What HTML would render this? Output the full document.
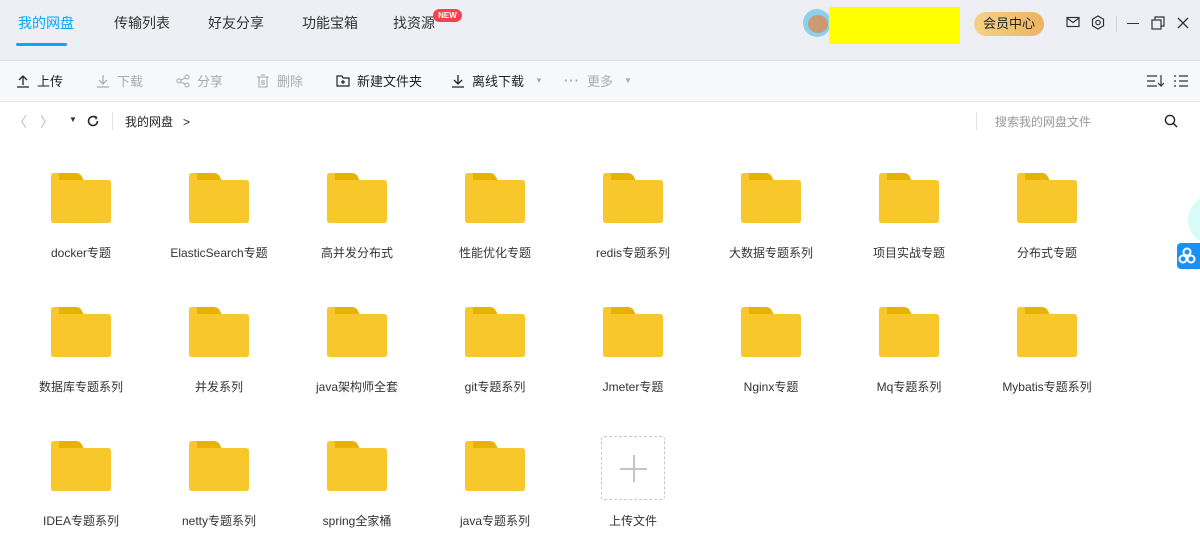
<!DOCTYPE html>
<html><head><meta charset="utf-8"><style>
*{margin:0;padding:0;box-sizing:border-box}
body{width:1200px;height:540px;overflow:hidden;background:#fff;font-family:"Liberation Sans","Noto Sans CJK SC",sans-serif;color:#333;position:relative}
.top{position:absolute;left:0;top:0;width:1200px;height:61px;background:#eeeff4;border-bottom:1px solid #dcdde2}
.tab{position:absolute;top:13px;font-size:14px;color:#333}
.tb{position:absolute;top:62px;left:0;width:1200px;height:40px;background:#f7f8fa;border-bottom:1px solid #e6e7eb}
.ti{position:absolute;top:9px;font-size:13px;color:#222;display:flex;align-items:center;gap:7px}
.ti.dis{color:#aaa}
.f{position:absolute;width:138px;text-align:center}
.f .lab{position:absolute;top:71px;width:138px;text-align:center;font-size:12px;color:#333}
.fold{position:absolute;left:39px;width:60px;height:50px}
</style></head><body>
<div class="top">
<div class="tab" style="left:18px;color:#06a7ff">我的网盘</div>
<div style="position:absolute;left:16px;top:43px;width:51px;height:3px;background:#06a7ff;border-radius:2px"></div>
<div class="tab" style="left:114px">传输列表</div>
<div class="tab" style="left:208px">好友分享</div>
<div class="tab" style="left:302px">功能宝箱</div>
<div class="tab" style="left:393px">找资源</div>
<div style="position:absolute;left:433px;top:9px;width:29px;height:13px;background:#f5424f;border-radius:7px;color:#fff;font-size:8px;font-weight:bold;text-align:center;line-height:13px">NEW</div>
<div style="position:absolute;left:803px;top:9px;width:28px;height:28px;border-radius:50%;background:#8dd0ee;overflow:hidden"><div style="position:absolute;left:5px;top:6px;width:20px;height:18px;border-radius:50%;background:#c99a73"></div></div>
<div style="position:absolute;left:829px;top:7px;width:131px;height:37px;background:#ffff00"></div>
<div style="position:absolute;left:974px;top:12px;width:70px;height:24px;border-radius:12px;background:linear-gradient(90deg,#f6d286,#eab464);font-size:13px;text-align:center;line-height:24px;color:#222">会员中心</div>
<svg style="position:absolute;left:1066px;top:16px" width="14" height="12" viewBox="0 0 14 12"><rect x="1" y="1.5" width="12" height="9" fill="none" stroke="#333" stroke-width="1.2"/><path d="M1 2l6 4.5 6-4.5" fill="none" stroke="#333" stroke-width="1.2"/></svg>
<svg style="position:absolute;left:1091px;top:15px" width="14" height="15" viewBox="0 0 14 15"><path d="M7 1l5.5 3.2v6.6L7 14 1.5 10.8V4.2z" fill="none" stroke="#333" stroke-width="1.2"/><circle cx="7" cy="7.5" r="2.2" fill="none" stroke="#333" stroke-width="1.2"/></svg>
<div style="position:absolute;left:1116px;top:16px;width:1px;height:16px;background:#d0d0d5"></div>
<div style="position:absolute;left:1127px;top:23px;width:12px;height:1.3px;background:#333"></div>
<svg style="position:absolute;left:1151px;top:16px" width="14" height="14" viewBox="0 0 14 14"><rect x="1" y="4" width="9" height="9" fill="none" stroke="#333" stroke-width="1.2"/><path d="M4 4V1h9v9h-3" fill="none" stroke="#333" stroke-width="1.2"/></svg>
<svg style="position:absolute;left:1177px;top:17px" width="12" height="12" viewBox="0 0 12 12"><path d="M1 1l10 10M11 1L1 11" stroke="#333" stroke-width="1.3"/></svg>
</div>
<div class="tb">
<div class="ti" style="left:16px"><svg width="14" height="14"><path d="M7 11V2M3 6l4-4 4 4M1 13h12" fill="none" stroke="#222" stroke-width="1.3"/></svg>上传</div>
<div class="ti dis" style="left:96px"><svg width="14" height="14"><path d="M7 1v9M3 6l4 4 4-4M1 13h12" fill="none" stroke="#aaa" stroke-width="1.2"/></svg>下载</div>
<div class="ti dis" style="left:176px"><svg width="14" height="14"><circle cx="3" cy="7" r="2" fill="none" stroke="#aaa"/><circle cx="11" cy="3" r="2" fill="none" stroke="#aaa"/><circle cx="11" cy="11" r="2" fill="none" stroke="#aaa"/><path d="M5 6l4-2M5 8l4 2" stroke="#aaa"/></svg>分享</div>
<div class="ti dis" style="left:256px"><svg width="14" height="14"><path d="M1 3h12M5 1h4M3 3v10h8V3M6 6v5M8 6v5" fill="none" stroke="#aaa" stroke-width="1.1"/></svg>删除</div>
<div class="ti" style="left:336px"><svg width="14" height="14"><path d="M1 2h5l1 2h6v8H1z" fill="none" stroke="#222" stroke-width="1.2"/><path d="M7 6v4M5 8h4" stroke="#222" stroke-width="1.2"/></svg>新建文件夹</div>
<div class="ti" style="left:451px"><svg width="14" height="14"><path d="M7 1v9M3 6l4 4 4-4M1 13h12" fill="none" stroke="#222" stroke-width="1.3"/></svg>离线下载<span style="color:#aaa;font-size:8px;margin-left:4px">▼</span></div>
<div class="ti dis" style="left:564px"><span style="letter-spacing:1px;font-weight:bold">···</span>更多<span style="font-size:8px;margin-left:4px">▼</span></div>
<svg style="position:absolute;left:1146px;top:11px" width="18" height="16"><path d="M1 3h10M1 8h8M1 13h10M15 2v11M12 10l3 3 3-3" fill="none" stroke="#333" stroke-width="1.2"/></svg>
<svg style="position:absolute;left:1173px;top:11px" width="16" height="16"><path d="M1 3h2M6 3h9M1 8h2M6 8h9M1 13h2M6 13h9" stroke="#333" stroke-width="1.2"/></svg>
</div>
<div style="position:absolute;top:102px;left:0;width:1200px;height:40px;font-size:12px">
<span style="position:absolute;left:13px;top:10px;color:#bbb;font-size:14px">〈</span>
<span style="position:absolute;left:40px;top:10px;color:#bbb;font-size:14px">〉</span>
<span style="position:absolute;left:69px;top:13px;font-size:8px">▼</span>
<svg style="position:absolute;left:86px;top:12px" width="14" height="14"><path d="M11.5 7A4.5 4.5 0 1 1 9.5 3.3" fill="none" stroke="#222" stroke-width="1.5"/><path d="M8 1.5l3.5 1.5-1.5 3" fill="#222"/></svg>
<div style="position:absolute;left:112px;top:10px;width:1px;height:18px;background:#e2e2e2"></div>
<span style="position:absolute;left:125px;top:11px;color:#222">我的网盘 &nbsp;&nbsp;&gt;</span>
<div style="position:absolute;left:976px;top:10px;width:1px;height:18px;background:#e2e2e2"></div>
<span style="position:absolute;left:995px;top:11px;color:#999">搜索我的网盘文件</span>
<svg style="position:absolute;left:1164px;top:12px" width="14" height="14"><circle cx="6" cy="6" r="4.6" fill="none" stroke="#222" stroke-width="1.4"/><path d="M9.5 9.5l3.5 3.5" stroke="#222" stroke-width="1.5"/></svg>
</div>
<div id="g"></div>
<div style="position:absolute;left:1188px;top:195px;width:50px;height:50px;border-radius:50%;background:#d8fbf8"></div>
<div style="position:absolute;left:1177px;top:243px;width:30px;height:26px;border-radius:4px;background:#1990f5"><svg width="24" height="26"><circle cx="10" cy="9" r="3.5" fill="none" stroke="#fff" stroke-width="2"/><circle cx="6" cy="16" r="3.5" fill="none" stroke="#fff" stroke-width="2"/><circle cx="14" cy="16" r="3.5" fill="none" stroke="#fff" stroke-width="2"/></svg></div>
<div style="position:absolute;left:601px;top:436px;width:64px;height:64px;border:1px dashed #c8c8c8;border-radius:3px"><div style="position:absolute;left:18px;top:31px;width:27px;height:2px;background:#c4c4c4"></div><div style="position:absolute;left:31px;top:18px;width:2px;height:27px;background:#c4c4c4"></div></div>
<div style="position:absolute;left:564px;top:512px;width:138px;text-align:center;font-size:12px">上传文件</div>
<script>
var n=["docker专题","ElasticSearch专题","高并发分布式","性能优化专题","redis专题系列","大数据专题系列","项目实战专题","分布式专题","数据库专题系列","并发系列","java架构师全套","git专题系列","Jmeter专题","Nginx专题","Mq专题系列","Mybatis专题系列","IDEA专题系列","netty专题系列","spring全家桶","java专题系列"];
var h="";n.forEach(function(t,i){var x=12+(i%8)*138,y=173+Math.floor(i/8)*134;
h+='<div class="f" style="left:'+x+'px;top:'+y+'px;height:90px"><svg class="fold" viewBox="0 0 60 50"><path d="M3 0h22q4 0 6 4l2 4H3z" fill="#e8b300"/><path d="M0 3q0-3 3-3h5v7h49q3 0 3 3v37q0 3-3 3H3q-3 0-3-3z" fill="#f7c72c"/></svg><div class="lab">'+t+'</div></div>';});
document.getElementById("g").innerHTML=h;
</script>
</body></html>
